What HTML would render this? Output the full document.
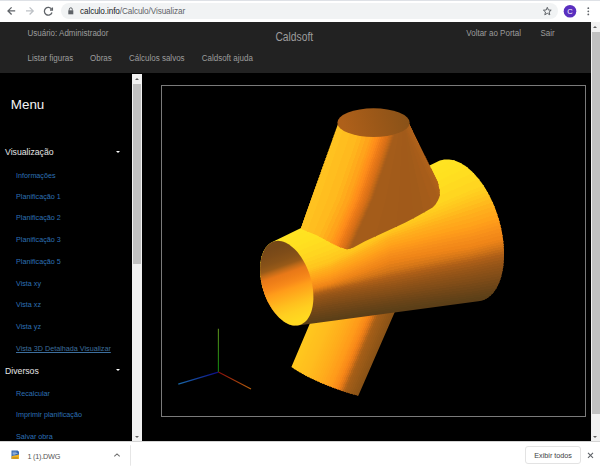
<!DOCTYPE html>
<html><head><meta charset="utf-8">
<style>
*{margin:0;padding:0;box-sizing:border-box}
html,body{width:600px;height:468px;overflow:hidden;background:#000;font-family:"Liberation Sans",sans-serif}
.abs{position:absolute}
#chrome{left:0;top:0;width:600px;height:22px;background:#fff;border-top:1px solid #dee1e6}
#addr{left:61px;top:3px;width:497px;height:16px;background:#f1f3f4;border-radius:8px}
#url{left:80px;top:6.6px;font-size:8.2px;letter-spacing:-0.1px;color:#5f6368;white-space:nowrap;line-height:10px}
#url b{color:#202124;font-weight:normal}
#hdr{left:0;top:21.7px;width:591px;height:51.6px;background:#222}
.nav{color:#9d9d9d;font-size:8px;white-space:nowrap;line-height:10px;transform:translateY(0.6px) scaleY(1.16);transform-origin:0 78%}
#side{left:0;top:73px;width:132px;height:368px;background:#000}
.sl{color:#2d70b5;font-size:7.2px;white-space:nowrap;line-height:9px;left:16px}
.sh{color:#e6e6e6;font-size:8.7px;white-space:nowrap;line-height:10px;left:5px}
.tri{width:0;height:0;border-left:2.4px solid transparent;border-right:2.4px solid transparent;border-top:2.4px solid #fff}
#sb1{left:132px;top:74px;width:10px;height:367px;background:#f1f1f1}
#sb1t{left:133px;top:84px;width:8px;height:180px;background:#c1c1c1}
#sb2{left:591px;top:22px;width:9px;height:419px;background:#f1f1f1}
#sb2t{left:592px;top:32px;width:8px;height:382px;background:#c1c1c1}
.ua{width:0;height:0;border-left:2.5px solid transparent;border-right:2.5px solid transparent;border-bottom:2.5px solid #606060}
.da{width:0;height:0;border-left:2.5px solid transparent;border-right:2.5px solid transparent;border-top:2.5px solid #606060}
#canvasbox{left:161px;top:85px;width:425px;height:332px;border:1px solid #7a7a7a}
#dl{left:0;top:441px;width:600px;height:27px;background:#fff;border-top:1px solid #d4d4d4}
</style></head><body>
<div id="chrome" class="abs"></div>
<!-- back arrow -->
<svg class="abs" style="left:0;top:0" width="600" height="22">
  <g fill="none" stroke="#5f6368" stroke-width="1.3">
    <path d="M15.2 10.9H8.4M11.6 7.4L8 10.9L11.6 14.5"/>
  </g>
  <g fill="none" stroke="#bdc1c6" stroke-width="1.3">
    <path d="M26 10.9H32.8M29.6 7.4L33.2 10.9L29.6 14.5"/>
  </g>
  <g fill="none" stroke="#5f6368" stroke-width="1.3">
    <path d="M51.6 9.2A3.9 3.9 0 1 0 52 12.5"/>
    <path d="M52.4 7.6V10H50" />
  </g>
</svg>
<div id="addr" class="abs"></div>
<svg class="abs" style="left:0;top:0" width="600" height="22">
  <rect x="68.3" y="10.3" width="5" height="4" fill="#5f6368"/>
  <path d="M69.3 10.5V9.3A1.5 1.5 0 0 1 72.3 9.3V10.5" stroke="#5f6368" stroke-width="1" fill="none"/>
  <path d="M547.3 7.3L548.4 10L551.2 10.2L549.1 12L549.8 14.8L547.3 13.3L544.8 14.8L545.5 12L543.4 10.2L546.2 10Z" fill="none" stroke="#5f6368" stroke-width="1"/>
  <circle cx="570" cy="11.3" r="6.3" fill="#5a2fbf"/>
  <text x="570" y="14" font-size="7.5" fill="#fff" text-anchor="middle" font-family="Liberation Sans">C</text>
  <circle cx="588.3" cy="8.2" r="0.9" fill="#5f6368"/>
  <circle cx="588.3" cy="11.3" r="0.9" fill="#5f6368"/>
  <circle cx="588.3" cy="14.4" r="0.9" fill="#5f6368"/>
</svg>
<div id="url" class="abs"><b>calculo.info</b>/Calculo/Visualizar</div>

<div id="hdr" class="abs"></div>
<div class="abs nav" style="left:27.5px;top:28.7px">Usuário: Administrador</div>
<div class="abs nav" style="left:275.4px;top:31px;font-size:10.3px;line-height:12px">Caldsoft</div>
<div class="abs nav" style="left:466.3px;top:28.7px">Voltar ao Portal</div>
<div class="abs nav" style="left:540.5px;top:28.7px">Sair</div>
<div class="abs nav" style="left:27.5px;top:53.5px">Listar figuras</div>
<div class="abs nav" style="left:90px;top:53.5px">Obras</div>
<div class="abs nav" style="left:129px;top:53.5px">Cálculos salvos</div>
<div class="abs nav" style="left:201.7px;top:53.5px">Caldsoft ajuda</div>

<div class="abs" style="left:10.8px;top:96.6px;color:#f4f4f4;font-size:13.4px;line-height:16px">Menu</div>
<div class="abs sh" style="top:147px">Visualização</div>
<div class="abs tri" style="left:115.6px;top:151px"></div>
<div class="abs sl" style="top:170.6px">Informações</div>
<div class="abs sl" style="top:191.7px">Planificação 1</div>
<div class="abs sl" style="top:213.4px">Planificação 2</div>
<div class="abs sl" style="top:235.1px">Planificação 3</div>
<div class="abs sl" style="top:256.8px">Planificação 5</div>
<div class="abs sl" style="top:278.5px">Vista xy</div>
<div class="abs sl" style="top:300.2px">Vista xz</div>
<div class="abs sl" style="top:321.9px">Vista yz</div>
<div class="abs sl" style="top:343.6px;text-decoration:underline;color:#3d6f9e">Vista 3D Detalhada Visualizar</div>
<div class="abs sh" style="top:365.5px">Diversos</div>
<div class="abs tri" style="left:115.6px;top:369px"></div>
<div class="abs sl" style="top:388.6px">Recalcular</div>
<div class="abs sl" style="top:410.3px">Imprimir planificação</div>
<div class="abs sl" style="top:432px">Salvar obra</div>

<div id="sb1" class="abs"></div>
<div id="sb1t" class="abs"></div>
<div class="abs ua" style="left:134.5px;top:78px"></div>
<div class="abs da" style="left:134.5px;top:435.5px"></div>
<div id="sb2" class="abs"></div>
<div id="sb2t" class="abs"></div>
<div class="abs ua" style="left:593px;top:26px"></div>
<div class="abs da" style="left:593px;top:435.5px"></div>

<div id="canvasbox" class="abs"></div>

<svg class="abs" style="left:0;top:0" width="600" height="441">
<defs>
<clipPath id="cLow"><path d="M310.4,322.3 L291.4,367 C300,373 312,379 325,384.5 C336,389 347,393 358.3,395.8 L394.9,311.75 L402,290 L315,290 Z"/></clipPath>
<clipPath id="cHor"><path d="M271.77,242.30 L437.79,161.47 L439.28,160.82 L440.82,160.29 L442.39,159.88 L443.99,159.60 L445.62,159.43 L447.28,159.39 L448.97,159.47 L450.67,159.67 L452.39,160.00 L454.13,160.44 L455.88,161.01 L457.64,161.69 L459.41,162.50 L461.18,163.42 L462.95,164.45 L464.72,165.60 L466.48,166.86 L468.24,168.23 L469.98,169.71 L471.70,171.29 L473.41,172.97 L475.10,174.75 L476.76,176.63 L478.40,178.60 L480.01,180.66 L481.59,182.80 L483.13,185.03 L484.63,187.34 L486.09,189.72 L487.52,192.17 L488.89,194.68 L490.22,197.26 L491.50,199.89 L492.73,202.58 L493.90,205.31 L495.02,208.09 L496.08,210.91 L497.08,213.75 L498.01,216.63 L498.89,219.54 L499.70,222.46 L500.44,225.39 L501.12,228.33 L501.73,231.28 L502.27,234.23 L502.74,237.16 L503.13,240.09 L503.46,243.00 L503.71,245.89 L503.89,248.75 L504.00,251.59 L504.03,254.38 L503.99,257.13 L503.88,259.84 L503.69,262.50 L503.44,265.10 L503.10,267.64 L502.70,270.12 L502.23,272.53 L501.68,274.87 L501.07,277.13 L500.38,279.31 L499.63,281.41 L498.82,283.41 L497.94,285.33 L496.99,287.16 L495.99,288.88 L494.93,290.51 L493.80,292.03 L492.63,293.45 L491.39,294.75 L490.11,295.95 L488.78,297.03 L487.40,298.00 L485.97,298.86 L484.51,299.59 L483.00,300.21 L481.46,300.71 L479.88,301.08 L478.27,301.34 L297.59,325.46 L296.68,325.56 L295.75,325.61 L294.82,325.59 L293.87,325.52 L292.91,325.39 L291.95,325.20 L290.98,324.96 L290.00,324.65 L289.02,324.29 L288.03,323.88 L287.04,323.40 L286.05,322.88 L285.07,322.29 L284.08,321.66 L283.10,320.97 L282.12,320.23 L281.15,319.44 L280.19,318.60 L279.24,317.71 L278.30,316.78 L277.36,315.79 L276.45,314.77 L275.54,313.70 L274.65,312.58 L273.78,311.43 L272.93,310.24 L272.09,309.01 L271.27,307.75 L270.48,306.45 L269.71,305.12 L268.96,303.76 L268.24,302.37 L267.54,300.96 L266.86,299.52 L266.22,298.06 L265.60,296.58 L265.01,295.08 L264.46,293.57 L263.93,292.04 L263.43,290.50 L262.97,288.94 L262.54,287.38 L262.14,285.82 L261.77,284.25 L261.44,282.68 L261.15,281.11 L260.89,279.54 L260.66,277.98 L260.47,276.43 L260.32,274.88 L260.20,273.35 L260.12,271.83 L260.08,270.33 L260.07,268.84 L260.10,267.38 L260.17,265.93 L260.27,264.51 L260.41,263.11 L260.58,261.75 L260.80,260.41 L261.04,259.10 L261.32,257.83 L261.64,256.59 L261.99,255.39 L262.38,254.22 L262.80,253.10 L263.25,252.02 L263.73,250.98 L264.25,249.98 L264.79,249.03 L265.37,248.13 L265.97,247.27 L266.61,246.47 L267.27,245.71 L267.96,245.01 L268.67,244.36 L269.41,243.76 L270.18,243.22 L270.96,242.73 L271.77,242.30 Z"/></clipPath>
<clipPath id="cTop"><path d="M338.39,122.65 L338.50,121.62 L338.82,120.59 L339.36,119.58 L340.11,118.58 L341.07,117.61 L342.22,116.68 L343.57,115.77 L345.10,114.91 L346.81,114.10 L348.69,113.34 L350.72,112.64 L352.88,112.00 L355.18,111.43 L357.59,110.92 L360.09,110.49 L362.68,110.13 L365.34,109.85 L368.05,109.65 L370.79,109.53 L373.55,109.49 L376.31,109.53 L379.05,109.65 L381.76,109.85 L384.42,110.13 L387.01,110.49 L389.51,110.92 L391.92,111.43 L394.22,112.00 L396.38,112.64 L398.41,113.34 L400.29,114.10 L402.00,114.91 L403.53,115.77 L404.88,116.68 L406.03,117.61 L406.99,118.58 L407.74,119.58 L408.28,120.59 L408.60,121.62 L408.71,122.65 L437.60,181.80 L438.60,185.30 L439.90,192.30 L439.40,197.00 L437.90,200.60 L435.50,204.50 L432.60,207.60 L424.40,212.30 L415.00,217.50 L405.00,222.70 L385.00,232.00 L365.00,241.30 L353.00,247.80 L347.00,249.30 L340.00,247.30 L332.70,243.80 L316.70,235.30 L300.70,228.70 Z"/></clipPath>
<linearGradient id="gTopIn" gradientUnits="userSpaceOnUse" x1="345" y1="130" x2="405" y2="112">
<stop offset="0" stop-color="#ae601a"/><stop offset="0.5" stop-color="#9c5818"/><stop offset="1" stop-color="#8a5218"/>
</linearGradient>
<linearGradient id="gLeftIn" gradientUnits="userSpaceOnUse" x1="288" y1="243" x2="312.9" y2="314.3">
<stop offset="0" stop-color="#764818"/><stop offset="0.1" stop-color="#7e4c18"/><stop offset="0.19" stop-color="#885218"/><stop offset="0.26" stop-color="#985a18"/><stop offset="0.31" stop-color="#c06a18"/><stop offset="0.37" stop-color="#e87818"/><stop offset="0.44" stop-color="#f08018"/><stop offset="0.51" stop-color="#f88a1a"/><stop offset="0.58" stop-color="#ff9c1a"/><stop offset="0.68" stop-color="#ffae1c"/><stop offset="0.78" stop-color="#ffc01e"/><stop offset="0.88" stop-color="#ffce20"/><stop offset="1" stop-color="#ffd820"/>
</linearGradient>
<linearGradient id="axG" gradientUnits="userSpaceOnUse" x1="218.4" y1="372.1" x2="218.4" y2="328.7"><stop offset="0" stop-color="#0c800c"/><stop offset="1" stop-color="#5a8a1c"/></linearGradient>
<linearGradient id="axB" gradientUnits="userSpaceOnUse" x1="218.4" y1="372.1" x2="178.3" y2="384.1"><stop offset="0" stop-color="#0c0c8a"/><stop offset="1" stop-color="#1a6aa8"/></linearGradient>
<linearGradient id="axR" gradientUnits="userSpaceOnUse" x1="218.4" y1="372.1" x2="251" y2="389"><stop offset="0" stop-color="#8a0c0c"/><stop offset="1" stop-color="#b8620c"/></linearGradient>
</defs>
<g clip-path="url(#cLow)"><polygon points="321.13,290.00 326.13,290.00 275.12,410.00 270.12,410.00" fill="#ffc71e" stroke="#ffc71e" stroke-width="0.8" shape-rendering="crispEdges"/>
<polygon points="326.13,290.00 328.13,290.00 277.12,410.00 275.12,410.00" fill="#ffc61e" stroke="#ffc61e" stroke-width="0.8" shape-rendering="crispEdges"/>
<polygon points="328.13,290.00 330.13,290.00 279.12,410.00 277.12,410.00" fill="#ffc51e" stroke="#ffc51e" stroke-width="0.8" shape-rendering="crispEdges"/>
<polygon points="330.13,290.00 332.13,290.00 281.12,410.00 279.12,410.00" fill="#ffc41e" stroke="#ffc41e" stroke-width="0.8" shape-rendering="crispEdges"/>
<polygon points="332.13,290.00 334.13,290.00 283.12,410.00 281.12,410.00" fill="#ffc31e" stroke="#ffc31e" stroke-width="0.8" shape-rendering="crispEdges"/>
<polygon points="334.13,290.00 336.13,290.00 285.12,410.00 283.12,410.00" fill="#ffc11e" stroke="#ffc11e" stroke-width="0.8" shape-rendering="crispEdges"/>
<polygon points="336.13,290.00 338.13,290.00 287.12,410.00 285.12,410.00" fill="#ffc01e" stroke="#ffc01e" stroke-width="0.8" shape-rendering="crispEdges"/>
<polygon points="338.13,290.00 340.13,290.00 289.12,410.00 287.12,410.00" fill="#ffbf1e" stroke="#ffbf1e" stroke-width="0.8" shape-rendering="crispEdges"/>
<polygon points="340.13,290.00 342.13,290.00 291.12,410.00 289.12,410.00" fill="#ffbe1e" stroke="#ffbe1e" stroke-width="0.8" shape-rendering="crispEdges"/>
<polygon points="342.13,290.00 344.13,290.00 293.12,410.00 291.12,410.00" fill="#ffbd1e" stroke="#ffbd1e" stroke-width="0.8" shape-rendering="crispEdges"/>
<polygon points="344.13,290.00 346.13,290.00 295.12,410.00 293.12,410.00" fill="#ffbb1e" stroke="#ffbb1e" stroke-width="0.8" shape-rendering="crispEdges"/>
<polygon points="346.13,290.00 348.14,290.00 297.12,410.00 295.12,410.00" fill="#ffb91e" stroke="#ffb91e" stroke-width="0.8" shape-rendering="crispEdges"/>
<polygon points="348.14,290.00 350.14,290.00 299.12,410.00 297.12,410.00" fill="#ffb71d" stroke="#ffb71d" stroke-width="0.8" shape-rendering="crispEdges"/>
<polygon points="350.14,290.00 352.14,290.00 301.12,410.00 299.12,410.00" fill="#ffb51d" stroke="#ffb51d" stroke-width="0.8" shape-rendering="crispEdges"/>
<polygon points="352.14,290.00 354.14,290.00 303.12,410.00 301.12,410.00" fill="#ffb31d" stroke="#ffb31d" stroke-width="0.8" shape-rendering="crispEdges"/>
<polygon points="354.14,290.00 356.14,290.00 305.12,410.00 303.12,410.00" fill="#ffb11d" stroke="#ffb11d" stroke-width="0.8" shape-rendering="crispEdges"/>
<polygon points="356.14,290.00 358.14,290.00 307.12,410.00 305.12,410.00" fill="#ffaf1c" stroke="#ffaf1c" stroke-width="0.8" shape-rendering="crispEdges"/>
<polygon points="358.14,290.00 360.14,290.00 309.12,410.00 307.12,410.00" fill="#ffad1c" stroke="#ffad1c" stroke-width="0.8" shape-rendering="crispEdges"/>
<polygon points="360.14,290.00 362.14,290.00 311.12,410.00 309.12,410.00" fill="#ffaa1c" stroke="#ffaa1c" stroke-width="0.8" shape-rendering="crispEdges"/>
<polygon points="362.14,290.00 364.14,290.00 313.12,410.00 311.12,410.00" fill="#ffa81c" stroke="#ffa81c" stroke-width="0.8" shape-rendering="crispEdges"/>
<polygon points="364.14,290.00 366.14,290.00 315.12,410.00 313.12,410.00" fill="#ffa41b" stroke="#ffa41b" stroke-width="0.8" shape-rendering="crispEdges"/>
<polygon points="366.14,290.00 368.14,290.00 317.12,410.00 315.12,410.00" fill="#ffa21b" stroke="#ffa21b" stroke-width="0.8" shape-rendering="crispEdges"/>
<polygon points="368.14,290.00 370.14,290.00 319.12,410.00 317.12,410.00" fill="#ff9e1a" stroke="#ff9e1a" stroke-width="0.8" shape-rendering="crispEdges"/>
<polygon points="370.14,290.00 372.14,290.00 321.12,410.00 319.12,410.00" fill="#ff9c1a" stroke="#ff9c1a" stroke-width="0.8" shape-rendering="crispEdges"/>
<polygon points="372.14,290.00 374.14,290.00 323.12,410.00 321.12,410.00" fill="#fe981a" stroke="#fe981a" stroke-width="0.8" shape-rendering="crispEdges"/>
<polygon points="374.14,290.00 376.14,290.00 325.12,410.00 323.12,410.00" fill="#fc9219" stroke="#fc9219" stroke-width="0.8" shape-rendering="crispEdges"/>
<polygon points="376.14,290.00 378.14,290.00 327.12,410.00 325.12,410.00" fill="#fa8e19" stroke="#fa8e19" stroke-width="0.8" shape-rendering="crispEdges"/>
<polygon points="378.14,290.00 380.14,290.00 329.12,410.00 327.12,410.00" fill="#f88818" stroke="#f88818" stroke-width="0.8" shape-rendering="crispEdges"/>
<polygon points="380.14,290.00 382.14,290.00 331.12,410.00 329.12,410.00" fill="#ef8118" stroke="#ef8118" stroke-width="0.8" shape-rendering="crispEdges"/>
<polygon points="382.14,290.00 384.14,290.00 333.12,410.00 331.12,410.00" fill="#e27918" stroke="#e27918" stroke-width="0.8" shape-rendering="crispEdges"/>
<polygon points="384.14,290.00 386.14,290.00 335.12,410.00 333.12,410.00" fill="#ce6f18" stroke="#ce6f18" stroke-width="0.8" shape-rendering="crispEdges"/>
<polygon points="386.14,290.00 388.15,290.00 337.12,410.00 335.12,410.00" fill="#b56518" stroke="#b56518" stroke-width="0.8" shape-rendering="crispEdges"/>
<polygon points="388.15,290.00 390.15,290.00 339.12,410.00 337.12,410.00" fill="#a65f18" stroke="#a65f18" stroke-width="0.8" shape-rendering="crispEdges"/>
<polygon points="390.15,290.00 392.15,290.00 341.12,410.00 339.12,410.00" fill="#a15d18" stroke="#a15d18" stroke-width="0.8" shape-rendering="crispEdges"/>
<polygon points="392.15,290.00 394.15,290.00 343.12,410.00 341.12,410.00" fill="#9d5b18" stroke="#9d5b18" stroke-width="0.8" shape-rendering="crispEdges"/>
<polygon points="394.15,290.00 396.15,290.00 345.12,410.00 343.12,410.00" fill="#995a18" stroke="#995a18" stroke-width="0.8" shape-rendering="crispEdges"/>
<polygon points="396.15,290.00 398.15,290.00 347.12,410.00 345.12,410.00" fill="#955817" stroke="#955817" stroke-width="0.8" shape-rendering="crispEdges"/>
<polygon points="398.15,290.00 400.15,290.00 349.12,410.00 347.12,410.00" fill="#915617" stroke="#915617" stroke-width="0.8" shape-rendering="crispEdges"/>
<polygon points="400.15,290.00 402.15,290.00 351.12,410.00 349.12,410.00" fill="#8e5417" stroke="#8e5417" stroke-width="0.8" shape-rendering="crispEdges"/>
<polygon points="402.15,290.00 407.15,290.00 356.12,410.00 351.12,410.00" fill="#8a5316" stroke="#8a5316" stroke-width="0.8" shape-rendering="crispEdges"/></g>
<g clip-path="url(#cHor)"><polygon points="250.00,247.91 270.00,238.17 290.00,228.43 310.00,218.69 330.00,208.95 350.00,199.21 370.00,189.47 390.00,179.73 410.00,169.99 430.00,160.25 450.00,150.51 470.00,140.77 490.00,131.03 510.00,121.29 520.00,116.42 520.00,128.97 510.00,133.69 490.00,143.12 470.00,152.56 450.00,162.24 430.00,171.90 410.00,181.53 390.00,191.15 370.00,200.87 350.00,210.55 330.00,220.20 310.00,229.53 290.00,238.85 270.00,248.18 250.00,257.51" fill="#ffe322" stroke="#ffe322" stroke-width="0.8" shape-rendering="crispEdges"/>
<polygon points="250.00,257.51 270.00,248.18 290.00,238.85 310.00,229.53 330.00,220.20 350.00,210.55 370.00,200.87 390.00,191.15 410.00,181.53 430.00,171.90 450.00,162.24 470.00,152.56 490.00,143.12 510.00,133.69 520.00,128.97 520.00,136.53 510.00,141.09 490.00,150.22 470.00,159.34 450.00,168.97 430.00,178.55 410.00,188.08 390.00,197.57 370.00,207.27 350.00,216.90 330.00,226.45 310.00,235.37 290.00,244.28 270.00,253.20 250.00,262.11" fill="#ffe221" stroke="#ffe221" stroke-width="0.8" shape-rendering="crispEdges"/>
<polygon points="250.00,262.11 270.00,253.20 290.00,244.28 310.00,235.37 330.00,226.45 350.00,216.90 370.00,207.27 390.00,197.57 410.00,188.08 430.00,178.55 450.00,168.97 470.00,159.34 490.00,150.22 510.00,141.09 520.00,136.53 520.00,144.08 510.00,148.49 490.00,157.31 470.00,166.13 450.00,175.70 430.00,185.20 410.00,194.63 390.00,203.99 370.00,213.68 350.00,223.25 330.00,232.70 310.00,241.21 290.00,249.71 270.00,258.21 250.00,266.71" fill="#ffe120" stroke="#ffe120" stroke-width="0.8" shape-rendering="crispEdges"/>
<polygon points="250.00,266.71 270.00,258.21 290.00,249.71 310.00,241.21 330.00,232.70 350.00,223.25 370.00,213.68 390.00,203.99 410.00,194.63 430.00,185.20 450.00,175.70 470.00,166.13 490.00,157.31 510.00,148.49 520.00,144.08 520.00,153.38 510.00,157.60 490.00,166.05 470.00,174.49 450.00,183.68 430.00,192.80 410.00,201.85 390.00,210.83 370.00,220.24 350.00,229.52 330.00,238.67 310.00,246.78 290.00,254.89 270.00,263.00 250.00,271.11" fill="#ffde20" stroke="#ffde20" stroke-width="0.8" shape-rendering="crispEdges"/>
<polygon points="250.00,271.11 270.00,263.00 290.00,254.89 310.00,246.78 330.00,238.67 350.00,229.52 370.00,220.24 390.00,210.83 410.00,201.85 430.00,192.80 450.00,183.68 470.00,174.49 490.00,166.05 510.00,157.60 520.00,153.38 520.00,162.68 510.00,166.71 490.00,174.78 470.00,182.85 450.00,191.66 430.00,200.40 410.00,209.08 390.00,217.68 370.00,226.81 350.00,235.79 330.00,244.64 310.00,252.35 290.00,260.07 270.00,267.78 250.00,275.50" fill="#ffda20" stroke="#ffda20" stroke-width="0.8" shape-rendering="crispEdges"/>
<polygon points="250.00,275.50 270.00,267.78 290.00,260.07 310.00,252.35 330.00,244.64 350.00,235.79 370.00,226.81 390.00,217.68 410.00,209.08 430.00,200.40 450.00,191.66 470.00,182.85 490.00,174.78 510.00,166.71 520.00,162.68 520.00,171.98 510.00,175.82 490.00,183.51 470.00,191.20 450.00,199.64 430.00,208.01 410.00,216.30 390.00,224.53 370.00,233.37 350.00,242.06 330.00,250.60 310.00,257.93 290.00,265.25 270.00,272.57 250.00,279.89" fill="#ffd620" stroke="#ffd620" stroke-width="0.8" shape-rendering="crispEdges"/>
<polygon points="250.00,279.89 270.00,272.57 290.00,265.25 310.00,257.93 330.00,250.60 350.00,242.06 370.00,233.37 390.00,224.53 410.00,216.30 430.00,208.01 450.00,199.64 470.00,191.20 490.00,183.51 510.00,175.82 520.00,171.98 520.00,176.05 510.00,179.81 490.00,187.33 470.00,194.86 450.00,203.01 430.00,211.09 410.00,219.12 390.00,227.10 370.00,236.48 350.00,245.64 330.00,254.57 310.00,261.63 290.00,268.69 270.00,275.75 250.00,282.81" fill="#ffd120" stroke="#ffd120" stroke-width="0.8" shape-rendering="crispEdges"/>
<polygon points="250.00,282.81 270.00,275.75 290.00,268.69 310.00,261.63 330.00,254.57 350.00,245.64 370.00,236.48 390.00,227.10 410.00,219.12 430.00,211.09 450.00,203.01 470.00,194.86 490.00,187.33 510.00,179.81 520.00,176.05 520.00,180.11 510.00,183.79 490.00,191.15 470.00,198.51 450.00,206.37 430.00,214.18 410.00,221.95 390.00,229.66 370.00,239.60 350.00,249.22 330.00,258.53 310.00,265.33 290.00,272.13 270.00,278.93 250.00,285.73" fill="#ffcc1f" stroke="#ffcc1f" stroke-width="0.8" shape-rendering="crispEdges"/>
<polygon points="250.00,285.73 270.00,278.93 290.00,272.13 310.00,265.33 330.00,258.53 350.00,249.22 370.00,239.60 390.00,229.66 410.00,221.95 430.00,214.18 450.00,206.37 470.00,198.51 490.00,191.15 510.00,183.79 520.00,180.11 520.00,184.18 510.00,187.78 490.00,194.97 470.00,202.17 450.00,209.74 430.00,217.27 410.00,224.77 390.00,232.23 370.00,242.71 350.00,252.80 330.00,262.50 310.00,269.04 290.00,275.58 270.00,282.11 250.00,288.65" fill="#ffc71e" stroke="#ffc71e" stroke-width="0.8" shape-rendering="crispEdges"/>
<polygon points="250.00,288.65 270.00,282.11 290.00,275.58 310.00,269.04 330.00,262.50 350.00,252.80 370.00,242.71 390.00,232.23 410.00,224.77 430.00,217.27 450.00,209.74 470.00,202.17 490.00,194.97 510.00,187.78 520.00,184.18 520.00,188.83 510.00,192.33 490.00,199.34 470.00,206.35 450.00,213.35 430.00,220.36 410.00,227.37 390.00,234.37 370.00,244.82 350.00,254.86 330.00,264.50 310.00,270.91 290.00,277.31 270.00,283.72 250.00,290.12" fill="#ffc11e" stroke="#ffc11e" stroke-width="0.8" shape-rendering="crispEdges"/>
<polygon points="250.00,290.12 270.00,283.72 290.00,277.31 310.00,270.91 330.00,264.50 350.00,254.86 370.00,244.82 390.00,234.37 410.00,227.37 430.00,220.36 450.00,213.35 470.00,206.35 490.00,199.34 510.00,192.33 520.00,188.83 520.00,193.48 510.00,196.89 490.00,203.71 470.00,210.52 450.00,216.97 430.00,223.45 410.00,229.96 390.00,236.51 370.00,246.92 350.00,256.92 330.00,266.50 310.00,272.78 290.00,279.05 270.00,285.32 250.00,291.60" fill="#ffba1d" stroke="#ffba1d" stroke-width="0.8" shape-rendering="crispEdges"/>
<polygon points="250.00,291.60 270.00,285.32 290.00,279.05 310.00,272.78 330.00,266.50 350.00,256.92 370.00,246.92 390.00,236.51 410.00,229.96 430.00,223.45 450.00,216.97 470.00,210.52 490.00,203.71 510.00,196.89 520.00,193.48 520.00,198.13 510.00,201.44 490.00,208.07 470.00,214.70 450.00,220.58 430.00,226.54 410.00,232.56 390.00,238.65 370.00,249.02 350.00,258.97 330.00,268.50 310.00,274.64 290.00,280.79 270.00,286.93 250.00,293.07" fill="#ffb31c" stroke="#ffb31c" stroke-width="0.8" shape-rendering="crispEdges"/>
<polygon points="250.00,293.07 270.00,286.93 290.00,280.79 310.00,274.64 330.00,268.50 350.00,258.97 370.00,249.02 390.00,238.65 410.00,232.56 430.00,226.54 450.00,220.58 470.00,214.70 490.00,208.07 510.00,201.44 520.00,198.13 520.00,202.78 510.00,206.00 490.00,212.44 470.00,218.88 450.00,224.32 430.00,229.86 410.00,235.49 390.00,241.22 370.00,251.39 350.00,261.16 330.00,270.50 310.00,276.51 290.00,282.52 270.00,288.53 250.00,294.54" fill="#ffad1c" stroke="#ffad1c" stroke-width="0.8" shape-rendering="crispEdges"/>
<polygon points="250.00,294.54 270.00,288.53 290.00,282.52 310.00,276.51 330.00,270.50 350.00,261.16 370.00,251.39 390.00,241.22 410.00,235.49 430.00,229.86 450.00,224.32 470.00,218.88 490.00,212.44 510.00,206.00 520.00,202.78 520.00,207.43 510.00,210.55 490.00,216.81 470.00,223.06 450.00,228.06 430.00,233.19 410.00,238.43 390.00,243.79 370.00,253.77 350.00,263.34 330.00,272.50 310.00,278.38 290.00,284.26 270.00,290.14 250.00,296.01" fill="#ffa81b" stroke="#ffa81b" stroke-width="0.8" shape-rendering="crispEdges"/>
<polygon points="250.00,296.01 270.00,290.14 290.00,284.26 310.00,278.38 330.00,272.50 350.00,263.34 370.00,253.77 390.00,243.79 410.00,238.43 430.00,233.19 450.00,228.06 470.00,223.06 490.00,216.81 510.00,210.55 520.00,207.43 520.00,212.08 510.00,215.11 490.00,221.17 470.00,227.24 450.00,231.80 430.00,236.51 410.00,241.36 390.00,246.36 370.00,256.14 350.00,265.52 330.00,274.51 310.00,280.25 290.00,286.00 270.00,291.74 250.00,297.49" fill="#ffa31a" stroke="#ffa31a" stroke-width="0.8" shape-rendering="crispEdges"/>
<polygon points="250.00,297.49 270.00,291.74 290.00,286.00 310.00,280.25 330.00,274.51 350.00,265.52 370.00,256.14 390.00,246.36 410.00,241.36 430.00,236.51 450.00,231.80 470.00,227.24 490.00,221.17 510.00,215.11 520.00,212.08 520.00,215.86 510.00,218.81 490.00,224.72 470.00,230.63 450.00,234.98 430.00,239.48 410.00,244.13 390.00,248.92 370.00,258.50 350.00,267.68 330.00,276.47 310.00,282.09 290.00,287.70 270.00,293.32 250.00,298.93" fill="#fe9d1a" stroke="#fe9d1a" stroke-width="0.8" shape-rendering="crispEdges"/>
<polygon points="250.00,298.93 270.00,293.32 290.00,287.70 310.00,282.09 330.00,276.47 350.00,267.68 370.00,258.50 390.00,248.92 410.00,244.13 430.00,239.48 450.00,234.98 470.00,230.63 490.00,224.72 510.00,218.81 520.00,215.86 520.00,219.63 510.00,222.51 490.00,228.27 470.00,234.03 450.00,238.16 430.00,242.45 410.00,246.90 390.00,251.49 370.00,260.86 350.00,269.84 330.00,278.44 310.00,283.92 290.00,289.41 270.00,294.89 250.00,300.38" fill="#fc981a" stroke="#fc981a" stroke-width="0.8" shape-rendering="crispEdges"/>
<polygon points="250.00,300.38 270.00,294.89 290.00,289.41 310.00,283.92 330.00,278.44 350.00,269.84 370.00,260.86 390.00,251.49 410.00,246.90 430.00,242.45 450.00,238.16 470.00,234.03 490.00,228.27 510.00,222.51 520.00,219.63 520.00,223.41 510.00,226.21 490.00,231.82 470.00,237.42 450.00,241.34 430.00,245.42 410.00,249.66 390.00,254.06 370.00,263.22 350.00,272.00 330.00,280.40 310.00,285.76 290.00,291.11 270.00,296.47 250.00,301.83" fill="#f9931a" stroke="#f9931a" stroke-width="0.8" shape-rendering="crispEdges"/>
<polygon points="250.00,301.83 270.00,296.47 290.00,291.11 310.00,285.76 330.00,280.40 350.00,272.00 370.00,263.22 390.00,254.06 410.00,249.66 430.00,245.42 450.00,241.34 470.00,237.42 490.00,231.82 510.00,226.21 520.00,223.41 520.00,227.19 510.00,229.91 490.00,235.36 470.00,240.82 450.00,244.52 430.00,248.39 410.00,252.43 390.00,256.63 370.00,265.33 350.00,273.70 330.00,281.72 310.00,286.99 290.00,292.26 270.00,297.53 250.00,302.80" fill="#f68e1a" stroke="#f68e1a" stroke-width="0.8" shape-rendering="crispEdges"/>
<polygon points="250.00,302.80 270.00,297.53 290.00,292.26 310.00,286.99 330.00,281.72 350.00,273.70 370.00,265.33 390.00,256.63 410.00,252.43 430.00,248.39 450.00,244.52 470.00,240.82 490.00,235.36 510.00,229.91 520.00,227.19 520.00,230.97 510.00,233.61 490.00,238.91 470.00,244.21 450.00,247.70 430.00,251.36 410.00,255.19 390.00,259.19 370.00,267.45 350.00,275.40 330.00,283.04 310.00,288.23 290.00,293.41 270.00,298.59 250.00,303.77" fill="#f38a19" stroke="#f38a19" stroke-width="0.8" shape-rendering="crispEdges"/>
<polygon points="250.00,303.77 270.00,298.59 290.00,293.41 310.00,288.23 330.00,283.04 350.00,275.40 370.00,267.45 390.00,259.19 410.00,255.19 430.00,251.36 450.00,247.70 470.00,244.21 490.00,238.91 510.00,233.61 520.00,230.97 520.00,234.74 510.00,237.32 490.00,242.46 470.00,247.60 450.00,250.88 430.00,254.33 410.00,257.96 390.00,261.76 370.00,269.57 350.00,277.10 330.00,284.37 310.00,289.46 290.00,294.56 270.00,299.65 250.00,304.75" fill="#f08618" stroke="#f08618" stroke-width="0.8" shape-rendering="crispEdges"/>
<polygon points="250.00,304.75 270.00,299.65 290.00,294.56 310.00,289.46 330.00,284.37 350.00,277.10 370.00,269.57 390.00,261.76 410.00,257.96 430.00,254.33 450.00,250.88 470.00,247.60 490.00,242.46 510.00,237.32 520.00,234.74 520.00,237.36 510.00,239.88 490.00,244.92 470.00,249.95 450.00,253.43 430.00,257.06 410.00,260.84 390.00,264.76 370.00,271.83 350.00,278.70 330.00,285.37 310.00,290.40 290.00,295.42 270.00,300.45 250.00,305.48" fill="#ea8218" stroke="#ea8218" stroke-width="0.8" shape-rendering="crispEdges"/>
<polygon points="250.00,305.48 270.00,300.45 290.00,295.42 310.00,290.40 330.00,285.37 350.00,278.70 370.00,271.83 390.00,264.76 410.00,260.84 430.00,257.06 450.00,253.43 470.00,249.95 490.00,244.92 510.00,239.88 520.00,237.36 520.00,239.97 510.00,242.44 490.00,247.37 470.00,252.30 450.00,255.99 430.00,259.79 410.00,263.72 390.00,267.75 370.00,274.10 350.00,280.30 330.00,286.37 310.00,291.33 290.00,296.29 270.00,301.26 250.00,306.22" fill="#e17d18" stroke="#e17d18" stroke-width="0.8" shape-rendering="crispEdges"/>
<polygon points="250.00,306.22 270.00,301.26 290.00,296.29 310.00,291.33 330.00,286.37 350.00,280.30 370.00,274.10 390.00,267.75 410.00,263.72 430.00,259.79 450.00,255.99 470.00,252.30 490.00,247.37 510.00,242.44 520.00,239.97 520.00,242.59 510.00,245.00 490.00,249.83 470.00,254.65 450.00,258.55 430.00,262.53 410.00,266.59 390.00,270.75 370.00,276.36 350.00,281.90 330.00,287.37 310.00,292.26 290.00,297.16 270.00,302.06 250.00,306.96" fill="#d87818" stroke="#d87818" stroke-width="0.8" shape-rendering="crispEdges"/>
<polygon points="250.00,306.96 270.00,302.06 290.00,297.16 310.00,292.26 330.00,287.37 350.00,281.90 370.00,276.36 390.00,270.75 410.00,266.59 430.00,262.53 450.00,258.55 470.00,254.65 490.00,249.83 510.00,245.00 520.00,242.59 520.00,245.20 510.00,247.56 490.00,252.28 470.00,257.00 450.00,260.85 430.00,264.78 410.00,268.80 390.00,272.89 370.00,278.09 350.00,283.24 330.00,288.37 310.00,293.20 290.00,298.03 270.00,302.86 250.00,307.69" fill="#ce7218" stroke="#ce7218" stroke-width="0.8" shape-rendering="crispEdges"/>
<polygon points="250.00,307.69 270.00,302.86 290.00,298.03 310.00,293.20 330.00,288.37 350.00,283.24 370.00,278.09 390.00,272.89 410.00,268.80 430.00,264.78 450.00,260.85 470.00,257.00 490.00,252.28 510.00,247.56 520.00,245.20 520.00,247.82 510.00,250.13 490.00,254.74 470.00,259.36 450.00,263.16 430.00,267.04 410.00,271.00 390.00,275.03 370.00,279.81 350.00,284.59 330.00,289.37 310.00,294.13 290.00,298.90 270.00,303.66 250.00,308.43" fill="#c26b18" stroke="#c26b18" stroke-width="0.8" shape-rendering="crispEdges"/>
<polygon points="250.00,308.43 270.00,303.66 290.00,298.90 310.00,294.13 330.00,289.37 350.00,284.59 370.00,279.81 390.00,275.03 410.00,271.00 430.00,267.04 450.00,263.16 470.00,259.36 490.00,254.74 510.00,250.13 520.00,247.82 520.00,250.43 510.00,252.69 490.00,257.20 470.00,261.71 450.00,265.47 430.00,269.30 410.00,273.20 390.00,277.17 370.00,281.54 350.00,285.94 330.00,290.37 310.00,295.07 290.00,299.77 270.00,304.47 250.00,309.16" fill="#b66418" stroke="#b66418" stroke-width="0.8" shape-rendering="crispEdges"/>
<polygon points="250.00,309.16 270.00,304.47 290.00,299.77 310.00,295.07 330.00,290.37 350.00,285.94 370.00,281.54 390.00,277.17 410.00,273.20 430.00,269.30 450.00,265.47 470.00,261.71 490.00,257.20 510.00,252.69 520.00,250.43 520.00,253.34 510.00,255.54 490.00,259.93 470.00,264.32 450.00,268.02 430.00,271.79 410.00,275.62 390.00,279.52 370.00,283.52 350.00,287.57 330.00,291.69 310.00,296.30 290.00,300.91 270.00,305.53 250.00,310.14" fill="#ac5e18" stroke="#ac5e18" stroke-width="0.8" shape-rendering="crispEdges"/>
<polygon points="250.00,310.14 270.00,305.53 290.00,300.91 310.00,296.30 330.00,291.69 350.00,287.57 370.00,283.52 390.00,279.52 410.00,275.62 430.00,271.79 450.00,268.02 470.00,264.32 490.00,259.93 510.00,255.54 520.00,253.34 520.00,256.25 510.00,258.38 490.00,262.66 470.00,266.93 450.00,270.58 430.00,274.28 410.00,278.05 390.00,281.88 370.00,285.50 350.00,289.21 330.00,293.01 310.00,297.54 290.00,302.06 270.00,306.59 250.00,311.11" fill="#a45b18" stroke="#a45b18" stroke-width="0.8" shape-rendering="crispEdges"/>
<polygon points="250.00,311.11 270.00,306.59 290.00,302.06 310.00,297.54 330.00,293.01 350.00,289.21 370.00,285.50 390.00,281.88 410.00,278.05 430.00,274.28 450.00,270.58 470.00,266.93 490.00,262.66 510.00,258.38 520.00,256.25 520.00,259.15 510.00,261.23 490.00,265.38 470.00,269.54 450.00,273.13 430.00,276.78 410.00,280.48 390.00,284.23 370.00,287.48 350.00,290.85 330.00,294.33 310.00,298.77 290.00,303.21 270.00,307.65 250.00,312.08" fill="#9c5818" stroke="#9c5818" stroke-width="0.8" shape-rendering="crispEdges"/>
<polygon points="250.00,312.08 270.00,307.65 290.00,303.21 310.00,298.77 330.00,294.33 350.00,290.85 370.00,287.48 390.00,284.23 410.00,280.48 430.00,276.78 450.00,273.13 470.00,269.54 490.00,265.38 510.00,261.23 520.00,259.15 520.00,261.77 510.00,263.79 490.00,267.84 470.00,271.89 450.00,275.38 430.00,278.92 410.00,282.51 390.00,286.16 370.00,289.33 350.00,292.61 330.00,296.01 310.00,300.34 290.00,304.67 270.00,308.99 250.00,313.32" fill="#965518" stroke="#965518" stroke-width="0.8" shape-rendering="crispEdges"/>
<polygon points="250.00,313.32 270.00,308.99 290.00,304.67 310.00,300.34 330.00,296.01 350.00,292.61 370.00,289.33 390.00,286.16 410.00,282.51 430.00,278.92 450.00,275.38 470.00,271.89 490.00,267.84 510.00,263.79 520.00,261.77 520.00,264.38 510.00,266.35 490.00,270.30 470.00,274.24 450.00,277.62 430.00,281.06 410.00,284.54 390.00,288.08 370.00,291.18 350.00,294.38 330.00,297.69 310.00,301.91 290.00,306.12 270.00,310.34 250.00,314.56" fill="#915318" stroke="#915318" stroke-width="0.8" shape-rendering="crispEdges"/>
<polygon points="250.00,314.56 270.00,310.34 290.00,306.12 310.00,301.91 330.00,297.69 350.00,294.38 370.00,291.18 390.00,288.08 410.00,284.54 430.00,281.06 450.00,277.62 470.00,274.24 490.00,270.30 510.00,266.35 520.00,264.38 520.00,267.00 510.00,268.92 490.00,272.75 470.00,276.59 450.00,279.86 430.00,283.19 410.00,286.57 390.00,290.01 370.00,293.02 350.00,296.14 330.00,299.37 310.00,303.48 290.00,307.58 270.00,311.69 250.00,315.79" fill="#8c5118" stroke="#8c5118" stroke-width="0.8" shape-rendering="crispEdges"/>
<polygon points="250.00,315.79 270.00,311.69 290.00,307.58 310.00,303.48 330.00,299.37 350.00,296.14 370.00,293.02 390.00,290.01 410.00,286.57 430.00,283.19 450.00,279.86 470.00,276.59 490.00,272.75 510.00,268.92 520.00,267.00 520.00,269.90 510.00,271.76 490.00,275.48 470.00,279.20 450.00,282.36 430.00,285.57 410.00,288.83 390.00,292.15 370.00,295.11 350.00,298.17 330.00,301.34 310.00,305.31 290.00,309.29 270.00,313.26 250.00,317.24" fill="#874f18" stroke="#874f18" stroke-width="0.8" shape-rendering="crispEdges"/>
<polygon points="250.00,317.24 270.00,313.26 290.00,309.29 310.00,305.31 330.00,301.34 350.00,298.17 370.00,295.11 390.00,292.15 410.00,288.83 430.00,285.57 450.00,282.36 470.00,279.20 490.00,275.48 510.00,271.76 520.00,269.90 520.00,272.81 510.00,274.61 490.00,278.21 470.00,281.81 450.00,284.85 430.00,287.94 410.00,291.09 390.00,294.29 370.00,297.20 350.00,300.21 330.00,303.30 310.00,307.15 290.00,310.99 270.00,314.84 250.00,318.69" fill="#824d18" stroke="#824d18" stroke-width="0.8" shape-rendering="crispEdges"/>
<polygon points="250.00,318.69 270.00,314.84 290.00,310.99 310.00,307.15 330.00,303.30 350.00,300.21 370.00,297.20 390.00,294.29 410.00,291.09 430.00,287.94 450.00,284.85 470.00,281.81 490.00,278.21 510.00,274.61 520.00,272.81 520.00,275.72 510.00,277.46 490.00,280.94 470.00,284.42 450.00,287.35 430.00,290.32 410.00,293.35 390.00,296.43 370.00,299.29 350.00,302.24 330.00,305.27 310.00,308.98 290.00,312.70 270.00,316.42 250.00,320.13" fill="#7d4b18" stroke="#7d4b18" stroke-width="0.8" shape-rendering="crispEdges"/>
<polygon points="250.00,320.13 270.00,316.42 290.00,312.70 310.00,308.98 330.00,305.27 350.00,302.24 370.00,299.29 390.00,296.43 410.00,293.35 430.00,290.32 450.00,287.35 470.00,284.42 490.00,280.94 510.00,277.46 520.00,275.72 520.00,278.62 510.00,280.30 490.00,283.67 470.00,287.03 450.00,289.84 430.00,292.70 410.00,295.61 390.00,298.57 370.00,301.51 350.00,304.52 330.00,307.59 310.00,311.15 290.00,314.72 270.00,318.28 250.00,321.84" fill="#774918" stroke="#774918" stroke-width="0.8" shape-rendering="crispEdges"/>
<polygon points="250.00,321.84 270.00,318.28 290.00,314.72 310.00,311.15 330.00,307.59 350.00,304.52 370.00,301.51 390.00,298.57 410.00,295.61 430.00,292.70 450.00,289.84 470.00,287.03 490.00,283.67 510.00,280.30 520.00,278.62 520.00,281.53 510.00,283.15 490.00,286.40 470.00,289.65 450.00,292.33 430.00,295.07 410.00,297.86 390.00,300.71 370.00,303.74 350.00,306.81 330.00,309.91 310.00,313.32 290.00,316.73 270.00,320.14 250.00,323.55" fill="#724718" stroke="#724718" stroke-width="0.8" shape-rendering="crispEdges"/>
<polygon points="250.00,323.55 270.00,320.14 290.00,316.73 310.00,313.32 330.00,309.91 350.00,306.81 370.00,303.74 390.00,300.71 410.00,297.86 430.00,295.07 450.00,292.33 470.00,289.65 490.00,286.40 510.00,283.15 520.00,281.53 520.00,284.43 510.00,286.00 490.00,289.13 470.00,292.26 450.00,294.83 430.00,297.45 410.00,300.12 390.00,302.85 370.00,305.96 350.00,309.09 330.00,312.23 310.00,315.49 290.00,318.75 270.00,322.00 250.00,325.26" fill="#6d4518" stroke="#6d4518" stroke-width="0.8" shape-rendering="crispEdges"/>
<polygon points="250.00,325.26 270.00,322.00 290.00,318.75 310.00,315.49 330.00,312.23 350.00,309.09 370.00,305.96 390.00,302.85 410.00,300.12 430.00,297.45 450.00,294.83 470.00,292.26 490.00,289.13 510.00,286.00 520.00,284.43 520.00,286.76 510.00,288.28 490.00,291.31 470.00,294.35 450.00,296.94 430.00,299.58 410.00,302.27 390.00,304.99 370.00,308.07 350.00,311.15 330.00,314.24 310.00,317.36 290.00,320.48 270.00,323.61 250.00,326.73" fill="#684318" stroke="#684318" stroke-width="0.8" shape-rendering="crispEdges"/>
<polygon points="250.00,326.73 270.00,323.61 290.00,320.48 310.00,317.36 330.00,314.24 350.00,311.15 370.00,308.07 390.00,304.99 410.00,302.27 430.00,299.58 450.00,296.94 470.00,294.35 490.00,291.31 510.00,288.28 520.00,286.76 520.00,289.08 510.00,290.55 490.00,293.49 470.00,296.43 450.00,299.06 430.00,301.72 410.00,304.41 390.00,307.13 370.00,310.17 350.00,313.20 330.00,316.24 310.00,319.23 290.00,322.22 270.00,325.21 250.00,328.21" fill="#644218" stroke="#644218" stroke-width="0.8" shape-rendering="crispEdges"/>
<polygon points="250.00,328.21 270.00,325.21 290.00,322.22 310.00,319.23 330.00,316.24 350.00,313.20 370.00,310.17 390.00,307.13 410.00,304.41 430.00,301.72 450.00,299.06 470.00,296.43 490.00,293.49 510.00,290.55 520.00,289.08 520.00,291.41 510.00,292.83 490.00,295.68 470.00,298.52 450.00,301.18 430.00,303.86 410.00,306.56 390.00,309.27 370.00,312.27 350.00,315.26 330.00,318.24 310.00,321.10 290.00,323.96 270.00,326.82 250.00,329.68" fill="#604118" stroke="#604118" stroke-width="0.8" shape-rendering="crispEdges"/>
<polygon points="250.00,329.68 270.00,326.82 290.00,323.96 310.00,321.10 330.00,318.24 350.00,315.26 370.00,312.27 390.00,309.27 410.00,306.56 430.00,303.86 450.00,301.18 470.00,298.52 490.00,295.68 510.00,292.83 520.00,291.41 520.00,292.86 510.00,294.25 490.00,297.04 470.00,299.83 450.00,302.49 430.00,305.17 410.00,307.85 390.00,310.55 370.00,313.44 350.00,316.33 330.00,319.20 310.00,322.00 290.00,324.80 270.00,327.59 250.00,330.39" fill="#5d4018" stroke="#5d4018" stroke-width="0.8" shape-rendering="crispEdges"/>
<polygon points="250.00,330.39 270.00,327.59 290.00,324.80 310.00,322.00 330.00,319.20 350.00,316.33 370.00,313.44 390.00,310.55 410.00,307.85 430.00,305.17 450.00,302.49 470.00,299.83 490.00,297.04 510.00,294.25 520.00,292.86 520.00,294.31 510.00,295.68 490.00,298.41 470.00,301.13 450.00,303.80 430.00,306.47 410.00,309.15 390.00,311.84 370.00,314.62 350.00,317.39 330.00,320.17 310.00,322.90 290.00,325.63 270.00,328.37 250.00,331.10" fill="#5c3f18" stroke="#5c3f18" stroke-width="0.8" shape-rendering="crispEdges"/>
<polygon points="250.00,331.10 270.00,328.37 290.00,325.63 310.00,322.90 330.00,320.17 350.00,317.39 370.00,314.62 390.00,311.84 410.00,309.15 430.00,306.47 450.00,303.80 470.00,301.13 490.00,298.41 510.00,295.68 520.00,294.31 520.00,300.77 510.00,302.10 490.00,304.77 470.00,307.44 450.00,310.11 430.00,312.78 410.00,315.45 390.00,318.12 370.00,320.79 350.00,323.46 330.00,326.13 310.00,328.80 290.00,331.47 270.00,334.14 250.00,336.81" fill="#5b3e18" stroke="#5b3e18" stroke-width="0.8" shape-rendering="crispEdges"/></g>
<polygon points="310.05,276.01 310.89,278.94 311.62,281.89 312.23,284.85 312.71,287.80 313.07,290.73 313.30,293.62 313.39,296.46 313.36,299.23 313.20,301.93 312.91,304.54 312.50,307.04 311.95,309.43 311.29,311.69 310.50,313.81 309.60,315.78 308.59,317.59 307.47,319.24 306.25,320.71 304.93,322.00 303.53,323.10 302.04,324.00 300.48,324.71 298.86,325.21 297.17,325.51 295.43,325.61 293.65,325.49 291.84,325.18 290.00,324.65 288.15,323.93 286.29,323.01 284.43,321.89 282.58,320.59 280.76,319.10 278.96,317.44 277.20,315.61 275.48,313.62 273.83,311.49 272.23,309.22 270.70,306.82 269.26,304.31 267.89,301.69 266.62,298.99 265.45,296.21 264.38,293.36 263.42,290.47 262.58,287.54 261.85,284.59 261.24,281.63 260.76,278.68 260.40,275.75 260.17,272.86 260.08,270.02 260.11,267.25 260.27,264.55 260.56,261.94 260.97,259.44 261.52,257.05 262.18,254.79 262.97,252.67 263.87,250.70 264.88,248.89 266.00,247.24 267.22,245.77 268.54,244.48 269.94,243.38 271.43,242.48 272.99,241.77 274.61,241.26 276.30,240.96 278.04,240.87 279.82,240.98 281.63,241.30 283.47,241.82 285.32,242.55 287.18,243.47 289.04,244.59 290.89,245.89 292.71,247.38 294.51,249.04 296.27,250.87 297.99,252.85 299.64,254.99 301.24,257.26 302.77,259.66 304.21,262.17 305.58,264.78 306.85,267.49 308.02,270.27 309.09,273.12" fill="url(#gLeftIn)"/>
<g clip-path="url(#cTop)"><polygon points="336.71,90.00 317.79,145.00 298.87,200.00 282.71,247.00 273.07,275.00 285.07,275.00 294.71,247.00 310.87,200.00 329.79,145.00 348.71,90.00" fill="#ffc420" stroke="#ffc420" stroke-width="0.8" shape-rendering="crispEdges"/>
<polygon points="348.71,90.00 329.79,145.00 310.87,200.00 294.71,247.00 285.07,275.00 290.88,275.00 301.47,247.00 319.25,200.00 338.20,145.00 356.48,90.00" fill="#ffc220" stroke="#ffc220" stroke-width="0.8" shape-rendering="crispEdges"/>
<polygon points="356.48,90.00 338.20,145.00 319.25,200.00 301.47,247.00 290.88,275.00 296.69,275.00 308.24,247.00 327.62,200.00 346.60,145.00 364.24,90.00" fill="#ffbe1f" stroke="#ffbe1f" stroke-width="0.8" shape-rendering="crispEdges"/>
<polygon points="364.24,90.00 346.60,145.00 327.62,200.00 308.24,247.00 296.69,275.00 302.50,275.00 315.00,247.00 336.00,200.00 355.00,145.00 372.00,90.00" fill="#ffba1e" stroke="#ffba1e" stroke-width="0.8" shape-rendering="crispEdges"/>
<polygon points="372.00,90.00 355.00,145.00 336.00,200.00 315.00,247.00 302.50,275.00 306.83,275.00 319.33,247.00 340.33,200.00 359.33,145.00 376.33,90.00" fill="#ffb41d" stroke="#ffb41d" stroke-width="0.8" shape-rendering="crispEdges"/>
<polygon points="376.33,90.00 359.33,145.00 340.33,200.00 319.33,247.00 306.83,275.00 311.17,275.00 323.67,247.00 344.67,200.00 363.67,145.00 380.67,90.00" fill="#ffac1c" stroke="#ffac1c" stroke-width="0.8" shape-rendering="crispEdges"/>
<polygon points="380.67,90.00 363.67,145.00 344.67,200.00 323.67,247.00 311.17,275.00 315.50,275.00 328.00,247.00 349.00,200.00 368.00,145.00 385.00,90.00" fill="#ffa41b" stroke="#ffa41b" stroke-width="0.8" shape-rendering="crispEdges"/>
<polygon points="385.00,90.00 368.00,145.00 349.00,200.00 328.00,247.00 315.50,275.00 317.83,275.00 330.33,247.00 351.33,200.00 370.33,145.00 387.33,90.00" fill="#ff9d1a" stroke="#ff9d1a" stroke-width="0.8" shape-rendering="crispEdges"/>
<polygon points="387.33,90.00 370.33,145.00 351.33,200.00 330.33,247.00 317.83,275.00 320.17,275.00 332.67,247.00 353.67,200.00 372.67,145.00 389.67,90.00" fill="#ff961a" stroke="#ff961a" stroke-width="0.8" shape-rendering="crispEdges"/>
<polygon points="389.67,90.00 372.67,145.00 353.67,200.00 332.67,247.00 320.17,275.00 322.50,275.00 335.00,247.00 356.00,200.00 375.00,145.00 392.00,90.00" fill="#ff8f1a" stroke="#ff8f1a" stroke-width="0.8" shape-rendering="crispEdges"/>
<polygon points="392.00,90.00 375.00,145.00 356.00,200.00 335.00,247.00 322.50,275.00 324.50,275.00 337.00,247.00 358.00,200.00 377.00,145.00 394.00,90.00" fill="#fb891a" stroke="#fb891a" stroke-width="0.8" shape-rendering="crispEdges"/>
<polygon points="394.00,90.00 377.00,145.00 358.00,200.00 337.00,247.00 324.50,275.00 326.50,275.00 339.00,247.00 360.00,200.00 379.00,145.00 396.00,90.00" fill="#f48219" stroke="#f48219" stroke-width="0.8" shape-rendering="crispEdges"/>
<polygon points="396.00,90.00 379.00,145.00 360.00,200.00 339.00,247.00 326.50,275.00 328.50,275.00 341.00,247.00 362.00,200.00 381.00,145.00 398.00,90.00" fill="#ec7b18" stroke="#ec7b18" stroke-width="0.8" shape-rendering="crispEdges"/>
<polygon points="398.00,90.00 381.00,145.00 362.00,200.00 341.00,247.00 328.50,275.00 329.83,275.00 342.33,247.00 363.33,200.00 382.33,145.00 399.33,90.00" fill="#e57718" stroke="#e57718" stroke-width="0.8" shape-rendering="crispEdges"/>
<polygon points="399.33,90.00 382.33,145.00 363.33,200.00 342.33,247.00 329.83,275.00 331.17,275.00 343.67,247.00 364.67,200.00 383.67,145.00 400.67,90.00" fill="#e07418" stroke="#e07418" stroke-width="0.8" shape-rendering="crispEdges"/>
<polygon points="400.67,90.00 383.67,145.00 364.67,200.00 343.67,247.00 331.17,275.00 332.50,275.00 345.00,247.00 366.00,200.00 385.00,145.00 402.00,90.00" fill="#db7118" stroke="#db7118" stroke-width="0.8" shape-rendering="crispEdges"/>
<polygon points="402.00,90.00 385.00,145.00 366.00,200.00 345.00,247.00 332.50,275.00 333.67,275.00 346.17,247.00 367.17,200.00 386.17,145.00 403.17,90.00" fill="#d46f18" stroke="#d46f18" stroke-width="0.8" shape-rendering="crispEdges"/>
<polygon points="403.17,90.00 386.17,145.00 367.17,200.00 346.17,247.00 333.67,275.00 334.83,275.00 347.33,247.00 368.33,200.00 387.33,145.00 404.33,90.00" fill="#cc6c18" stroke="#cc6c18" stroke-width="0.8" shape-rendering="crispEdges"/>
<polygon points="404.33,90.00 387.33,145.00 368.33,200.00 347.33,247.00 334.83,275.00 336.00,275.00 348.50,247.00 369.50,200.00 388.50,145.00 405.50,90.00" fill="#c46918" stroke="#c46918" stroke-width="0.8" shape-rendering="crispEdges"/>
<polygon points="405.50,90.00 388.50,145.00 369.50,200.00 348.50,247.00 336.00,275.00 337.00,275.00 349.50,247.00 370.50,200.00 389.50,145.00 406.50,90.00" fill="#bc6618" stroke="#bc6618" stroke-width="0.8" shape-rendering="crispEdges"/>
<polygon points="406.50,90.00 389.50,145.00 370.50,200.00 349.50,247.00 337.00,275.00 338.00,275.00 350.50,247.00 371.50,200.00 390.50,145.00 407.50,90.00" fill="#b26219" stroke="#b26219" stroke-width="0.8" shape-rendering="crispEdges"/>
<polygon points="407.50,90.00 390.50,145.00 371.50,200.00 350.50,247.00 338.00,275.00 339.00,275.00 351.50,247.00 372.50,200.00 391.50,145.00 408.50,90.00" fill="#aa5e1a" stroke="#aa5e1a" stroke-width="0.8" shape-rendering="crispEdges"/>
<polygon points="408.50,90.00 391.50,145.00 372.50,200.00 351.50,247.00 339.00,275.00 364.85,275.00 372.70,247.00 385.89,200.00 396.78,145.00 406.04,90.00" fill="#a45c1a" stroke="#a45c1a" stroke-width="0.8" shape-rendering="crispEdges"/>
<polygon points="406.04,90.00 396.78,145.00 385.89,200.00 372.70,247.00 364.85,275.00 390.69,275.00 393.90,247.00 399.29,200.00 402.06,145.00 403.57,90.00" fill="#a25b1a" stroke="#a25b1a" stroke-width="0.8" shape-rendering="crispEdges"/>
<polygon points="403.57,90.00 402.06,145.00 399.29,200.00 393.90,247.00 390.69,275.00 416.54,275.00 415.10,247.00 412.68,200.00 407.35,145.00 401.11,90.00" fill="#a15a1a" stroke="#a15a1a" stroke-width="0.8" shape-rendering="crispEdges"/>
<polygon points="401.11,90.00 407.35,145.00 412.68,200.00 415.10,247.00 416.54,275.00 435.82,275.00 430.58,247.00 421.78,200.00 409.80,145.00 397.23,90.00" fill="#a15b1a" stroke="#a15b1a" stroke-width="0.8" shape-rendering="crispEdges"/>
<polygon points="397.23,90.00 409.80,145.00 421.78,200.00 430.58,247.00 435.82,275.00 455.11,275.00 446.06,247.00 430.87,200.00 412.26,145.00 393.35,90.00" fill="#a45c1a" stroke="#a45c1a" stroke-width="0.8" shape-rendering="crispEdges"/>
<polygon points="393.35,90.00 412.26,145.00 430.87,200.00 446.06,247.00 455.11,275.00 474.39,275.00 461.54,247.00 439.96,200.00 414.72,145.00 389.47,90.00" fill="#a75d1a" stroke="#a75d1a" stroke-width="0.8" shape-rendering="crispEdges"/>
<polygon points="389.47,90.00 414.72,145.00 439.96,200.00 461.54,247.00 474.39,275.00 476.39,275.00 463.54,247.00 441.96,200.00 416.72,145.00 391.47,90.00" fill="#aa5f1a" stroke="#aa5f1a" stroke-width="0.8" shape-rendering="crispEdges"/>
<polygon points="391.47,90.00 416.72,145.00 441.96,200.00 463.54,247.00 476.39,275.00 478.39,275.00 465.54,247.00 443.96,200.00 418.72,145.00 393.47,90.00" fill="#ad601a" stroke="#ad601a" stroke-width="0.8" shape-rendering="crispEdges"/>
<polygon points="393.47,90.00 418.72,145.00 443.96,200.00 465.54,247.00 478.39,275.00 480.39,275.00 467.54,247.00 445.96,200.00 420.72,145.00 395.47,90.00" fill="#b0611a" stroke="#b0611a" stroke-width="0.8" shape-rendering="crispEdges"/>
<polygon points="395.47,90.00 420.72,145.00 445.96,200.00 467.54,247.00 480.39,275.00 510.39,275.00 497.54,247.00 475.96,200.00 450.72,145.00 425.47,90.00" fill="#b2621a" stroke="#b2621a" stroke-width="0.8" shape-rendering="crispEdges"/></g>
<ellipse cx="373.55" cy="122.65" rx="36.16" ry="14.36" fill="url(#gTopIn)"/>
<line x1="218.4" y1="372.1" x2="218.4" y2="328.7" stroke="url(#axG)" stroke-width="1.1"/>
<line x1="218.4" y1="372.1" x2="178.3" y2="384.1" stroke="url(#axB)" stroke-width="1.1"/>
<line x1="218.4" y1="372.1" x2="251" y2="389" stroke="url(#axR)" stroke-width="1.1"/>
</svg>

<div id="dl" class="abs"></div>
<svg class="abs" style="left:0;top:441px" width="600" height="27">
  <path d="M11.5 9.4H17.6L19 10.8V17.9H11.5Z" fill="#3567b0"/>
  <path d="M11.5 15.2L19 13.6V17.9H11.5Z" fill="#f5b31e"/>
  <path d="M12.5 11.2H16.5M12.5 12.5H17.5M12.5 13.8H15.5" stroke="#cfe0f5" stroke-width="0.6"/>
  <path d="M12.3 17H18.2" stroke="#8a6a2a" stroke-width="0.7"/>
  <line x1="130.5" y1="4.3" x2="130.5" y2="24.7" stroke="#e6e6e6" stroke-width="1"/>
  <path d="M114.3 15.4L117 12.9L119.7 15.4" fill="none" stroke="#707070" stroke-width="1.1"/>
  <rect x="525.5" y="5.5" width="55" height="17" rx="2.5" fill="#fff" stroke="#e3e3e3"/>
  <path d="M588 11.8L593 16.8M593 11.8L588 16.8" stroke="#5f6368" stroke-width="1.1"/>
</svg>
<div class="abs" style="left:27.5px;top:452px;font-size:7.3px;color:#555;line-height:9px;white-space:nowrap;letter-spacing:-0.25px">1 (1).DWG</div>
<div class="abs" style="left:534.3px;top:450.6px;font-size:7.2px;color:#3c4043;line-height:9px;white-space:nowrap">Exibir todos</div>
</body></html>
